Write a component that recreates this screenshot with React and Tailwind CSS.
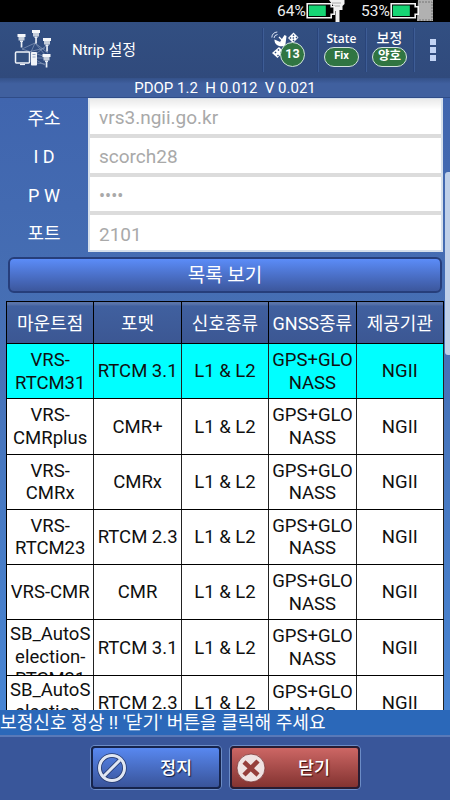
const fields = [
  { label: '주소', value: 'vrs3.ngii.go.kr' },
  { label: 'I D', value: 'scorch28' },
  { label: 'P W', value: '••••', secret: true },
  { label: '포트', value: '2101' },
]

const columns = ['마운트점', '포멧', '신호종류', 'GNSS종류', '제공기관']

const mounts = [
  { name: ['VRS-', 'RTCM31'], format: 'RTCM 3.1', active: true },
  { name: ['VRS-', 'CMRplus'], format: 'CMR+' },
  { name: ['VRS-', 'CMRx'], format: 'CMRx' },
  { name: ['VRS-', 'RTCM23'], format: 'RTCM 2.3' },
  { name: ['VRS-CMR'], format: 'CMR' },
  { name: ['SB_AutoS', 'election-', 'RTCM31'], format: 'RTCM 3.1' },
  { name: ['SB_AutoS', 'election-'], format: 'RTCM 2.3', top: true },
]

function Antenna({ x, y }) {
  return (
    <g transform={`translate(${x} ${y})`}>
      <path d="M0 0h8v3H0z" fill="#f5f7fa" />
      <path d="M1 3h6v3.5H1z" fill="#c5cedb" />
      <path d="M2.5 6.5h3V8h-3zM3.2 8h1.7v5.5H3.2z" fill="#e9eef5" />
    </g>
  )
}

function NetworkIcon() {
  return (
    <svg viewBox="0 0 38 40" className="h-[40px] w-[38px]">
      <path d="M8 20 21 14 34 24M21 14 17 23M21 14 32 27M8 20l24 8M23 24l9-7M22 31l9 5M22 34l9 1M22 29l9 0M14 23l17-4" stroke="#8799b9" strokeWidth=".7" fill="none" />
      <Antenna x={3.5} y={5} />
      <Antenna x={18} y={1} />
      <Antenna x={29} y={9} />
      <Antenna x={28.5} y={25} />
      <rect x="1.5" y="23" width="14" height="11" rx="1" fill="#33507f" stroke="#eef2f8" strokeWidth="1.5" />
      <path d="M6 35.5h5" stroke="#eef2f8" strokeWidth="1.2" />
      <rect x="17" y="23" width="6" height="13.500" rx=".8" fill="#f1f4f8" />
      <path d="M18.5 25.5h3M18.5 28h3" stroke="#7f93b5" strokeWidth=".8" />
    </svg>
  )
}

// dish in the middle, one checkered solar panel on each side
function SatelliteIcon() {
  return (
    <svg viewBox="0 0 30 30" className="h-[30px] w-[30px]">
      <path d="M.8 6.500a6 6 0 0 1 5.500-5.500M3 7a4 4 0 0 1 3.500-3.500" stroke="#dbe4f4" strokeWidth="1" fill="none" />
      <path d="M3.500 8.500c-.5 6 7 9 11.500 5z" fill="#fff" />
      <path d="m9 11 4.500-7 2 1-1 8-2 1z" fill="#fff" />
      <path d="m8 6 4 4" stroke="#fff" strokeWidth="1.2" />
      <path d="m22.500 1.500 5 5-5.500 5.500-5-5z" fill="#fff" />
      <path d="m19 6.500 1 1M22 3.800l1 1M22 9l1 1M25 6l1 1M21.800 6.500l1 1" stroke="#33507f" strokeWidth="1.500" />
      <path d="m8 16 4.500 4.500L6.500 27l-5.500-5z" fill="#fff" />
      <path d="m4 21 1 1M7 18.500l1 1M6.500 24l1 1M9.500 21l1 1" stroke="#33507f" strokeWidth="1.500" />
    </svg>
  )
}

function Battery({ children }) {
  return (
    <svg viewBox="0 0 44 22" className="h-[22px] w-[44px]">
      {children}
      <path d="M1.200 3.800h24v3h3v7.500h-3v3.500h-24z" fill="#000" stroke="#f4f4f4" strokeWidth="1.600" />
      <rect x="2.800" y="5.500" width="17" height="10.500" fill="#16d574" />
    </svg>
  )
}

function StatusBar() {
  return (
    <div className="flex h-[22px] justify-end bg-black pr-[16px] text-[15.5px] leading-[23px] text-[#ededed]">
      <span className="w-[29px]">64%</span>
      <Battery>
        <path d="M23 0h15.500v4l-2 2v4h-3v12h-4V11h-2V6z" fill="#f1f1f1" />
        <path d="M26 3h9M28 6h6" stroke="#aaa" strokeWidth="1" />
      </Battery>
      <span className="ml-[11px] w-[29px]">53%</span>
      <Battery>
        <path d="M28 0h15v21H27z" fill="#b1b1b1" />
        <path d="M29 2h13v18h-13" fill="none" stroke="#777" strokeWidth="1" strokeDasharray="2 1" />
      </Battery>
    </div>
  )
}

function Pill({ title, children, small }) {
  return (
    <div className="flex h-[44px] w-[48px] flex-col items-center border-l border-[#29447a] pt-[2px] shadow-[inset_1px_0_0_#3e5d96]">
      <span className={small ? "font-['Open_Sans',sans-serif] text-[12px] leading-[17px] font-semibold" : 'text-[14px] leading-[16px] font-medium'}>{title}</span>
      <span className={`flex h-[20px] w-[35px] items-center justify-center rounded-full border-[1.5px] border-[#d4e4df] bg-[#307542] font-bold ${small ? "font-['Roboto'] text-[11px]" : 'mt-px text-[12.5px]'}`}>{children}</span>
    </div>
  )
}

function Header() {
  return (
    <header className="flex h-[56px] items-center bg-linear-to-b from-[#324f82] to-[#304a7c] text-white">
      <div className="-mt-[3px] ml-[14px]"><NetworkIcon /></div>
      <h1 className="mt-px ml-[20px] text-[15px] leading-none font-normal">Ntrip 설정</h1>
      <div className="-mt-px ml-auto flex">
        <div className="relative h-[44px] w-[55px] border-l border-[#29447a] pt-[3px] pl-[8px] shadow-[inset_1px_0_0_#3e5d96]">
          <SatelliteIcon />
          <span className="absolute top-[14px] left-[17px] flex size-[25px] items-center justify-center rounded-full border-[1.5px] border-[#d4e4df] bg-[#307542] text-[12.5px] font-bold">13</span>
        </div>
        <Pill title="State" small>Fix</Pill>
        <Pill title="보정">양호</Pill>
        <div className="flex h-[44px] w-[37px] flex-col items-center justify-center gap-[2px] border-l border-[#29447a] pt-px pl-[2px] shadow-[inset_1px_0_0_#3e5d96]">
          <i className="size-[6px] bg-[#c3d4f4]" />
          <i className="size-[6px] bg-[#c3d4f4]" />
          <i className="size-[6px] bg-[#c3d4f4]" />
        </div>
      </div>
    </header>
  )
}

function ConnectionForm() {
  return (
    <div className="flex h-[154px]">
      <div className="flex w-[88px] flex-col pt-[2px] text-[18px] leading-[38.3px] text-white">
        {fields.map(f => <div key={f.label} className="h-[38.3px] text-center">{f.label}</div>)}
      </div>
      <div className="flex w-[355px] flex-col gap-[4px] border-[2px] border-t-[1px] border-[#d6e0ec] bg-[#dcdcdc]">
        {fields.map((f, i) => (
          <div
            key={f.label}
            className={`flex flex-1 items-center pt-[4px] pl-[9px] text-[19px] leading-[24px] text-[#a9a9a9] ${i === 0 ? 'bg-linear-to-b from-[#eaeaea] to-white to-30%' : 'bg-white'}`}
          >
            {f.secret ? (
              <span className="text-[18px]">{f.value}</span>
            ) : f.value}
          </div>
        ))}
      </div>
    </div>
  )
}

function Cell({ children, top }) {
  return (
    <div className={`flex min-h-0 flex-col items-center overflow-hidden border-r border-[#222] whitespace-nowrap ${top ? 'justify-start pt-[3px]' : 'justify-center pt-px'}`}>
      {children}
    </div>
  )
}

function MountTable() {
  return (
    <div className="mt-[8px] ml-[6px] h-[409px] w-[438px] overflow-hidden border-l border-black">
      <div className="grid h-[43px] grid-cols-5 border-y border-black bg-linear-to-b from-[#5873a9] from-5% via-[#40609f] via-10% to-[#3c5793] text-[18px] leading-[44px] text-white">
        {columns.map(c => <div key={c} className="border-r border-black text-center whitespace-nowrap">{c}</div>)}
      </div>
      {mounts.map((m, i) => (
        <div
          key={i}
          className={`grid h-[55.25px] grid-cols-5 border-b border-black text-[18.5px] leading-[22.4px] text-[#101010] ${m.active ? 'bg-[#00ffff]' : 'bg-white'}`}
        >
          <Cell top={m.name.length > 2 || m.top}>{m.name.map(n => <div key={n}>{n}</div>)}</Cell>
          <Cell>{m.format}</Cell>
          <Cell>L1 &amp; L2</Cell>
          <Cell><div>GPS+GLO</div><div>NASS</div></Cell>
          <Cell>NGII</Cell>
        </div>
      ))}
    </div>
  )
}

function Footer() {
  return (
    <footer className="flex h-[65px] gap-[9px] border-t-2 border-[#5979b8] bg-[#39569a] pt-[9px] pl-[91px] font-medium text-white">
      <button className="flex h-[43px] w-[130px] items-center rounded-[4px] border-2 border-[#16244c] bg-linear-to-b from-[#5888f0] to-[#39549a] pl-[4px] shadow-[0_0_0_1px_#6c8cc6] [text-shadow:1px_1px_1px_#111c40]">
        <svg viewBox="0 0 30 30" className="size-[30px]">
          <circle cx="15" cy="15" r="12.500" fill="none" stroke="#24386c" strokeWidth="4.500" />
          <path d="M7 23 23 7" stroke="#24386c" strokeWidth="4.500" />
          <circle cx="15" cy="15" r="12.500" fill="none" stroke="#e1e7f3" strokeWidth="3" />
          <path d="M7 23 23 7" stroke="#e1e7f3" strokeWidth="3" />
        </svg>
        <span className="mt-px ml-[33px] text-[17.5px]">정지</span>
      </button>
      <button className="flex h-[43px] w-[130px] items-center rounded-[4px] border-2 border-[#281c32] bg-linear-to-b from-[#cd6765] to-[#833331] pl-[4px] shadow-[0_0_0_1px_#6c8cc6] [text-shadow:1px_1px_1px_#38100f]">
        <svg viewBox="0 0 30 30" className="size-[30px]">
          <circle cx="15" cy="15" r="14" fill="#efe2e2" stroke="#7c3838" strokeWidth=".8" />
          <path d="m8 9 14 13M22 8 8 22" stroke="#963f3c" strokeWidth="4.500" />
        </svg>
        <span className="mt-px ml-[32px] text-[17.5px]">닫기</span>
      </button>
    </footer>
  )
}

export default function App() {
  return (
    <div className="relative flex h-[800px] w-[450px] flex-col overflow-hidden bg-[#456fb5] font-['Roboto','Noto_Sans_CJK_KR',sans-serif]">
      <StatusBar />
      <Header />
      <div className="h-[20px] border-b border-[#2f4c88] bg-linear-to-b from-[#345189] to-[#40609f] to-30% text-center text-[15px] leading-[20px] text-white">
        <span className="whitespace-pre">PDOP 1.2  H 0.012  V 0.021</span>
      </div>
      <main className="h-[612px] bg-linear-to-b from-[#4065ae] via-[#466fb4] via-35% to-[#4885d3]">
        <ConnectionForm />
        <button className="mt-[5px] ml-[8px] block h-[36px] w-[434px] rounded-[6px] border-2 border-[#263e7b] bg-linear-to-b from-[#5b8cf8] to-[#3c579d] text-[19px] leading-[34px] font-normal text-white">
          목록 보기
        </button>
        <MountTable />
      </main>
      <div className="h-[25px] bg-[#2b68b9] text-[18.1px] leading-[26px] whitespace-nowrap text-white">
        보정신호 정상 !! '닫기' 버튼을 클릭해 주세요
      </div>
      <Footer />
      {/* scroll thumb */}
      <div className="absolute top-[172px] right-0 h-[183px] w-[5px] rounded-l-[3px] bg-[#bfd0e9]" />
    </div>
  )
}
